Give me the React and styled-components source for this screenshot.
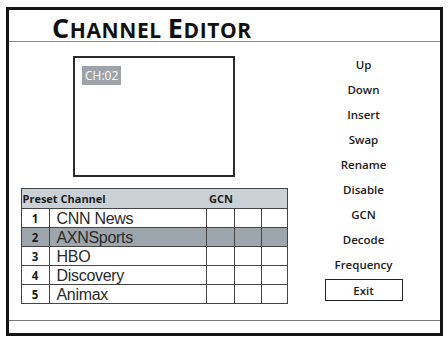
import React from 'react';
import styled, { createGlobalStyle } from 'styled-components';

const GlobalStyle = createGlobalStyle`
  html, body {
    margin: 0;
    padding: 0;
    background: #ffffff;
  }
  body {
    font-family: "Open Sans", "Liberation Sans", sans-serif;
  }
`;

const Frame = styled.div`
  box-sizing: border-box;
  margin: 7px 0 0 6px;
  width: 437px;
  height: 329px;
  border: 3px solid #141414;
  display: flex;
  flex-direction: column;
`;

const TitleBar = styled.div`
  height: 31px;
  border-bottom: 1px solid #8a8a8a;
  display: flex;
  align-items: flex-end;
  padding-left: 43px;
`;

const Title = styled.h1`
  margin: 0 0 -4px 0;
  font-family: "Open Sans", sans-serif;
  font-weight: 700;
  font-size: 21px;
  line-height: 30px;
  letter-spacing: 0.6px;
  color: #111;
`;

const BigLetter = styled.span`
  font-size: 27px;
`;

const Body = styled.div`
  flex: 1;
  display: flex;
  padding: 14px 0 0 12px;
`;

const LeftColumn = styled.div`
  width: 266px;
  display: flex;
  flex-direction: column;
  align-items: center;
  gap: 11px;
`;

const Preview = styled.div`
  box-sizing: border-box;
  width: 162px;
  height: 121px;
  border: 2px solid #2a2a2a;
  padding: 5px 7px;
`;

const ChannelTag = styled.span`
  display: inline-block;
  background: #9ea3aa;
  color: #ffffff;
  font-family: "Open Sans", sans-serif;
  font-size: 12px;
  line-height: 19px;
  padding: 0 3px;
`;

const Table = styled.table`
  width: 266px;
  border-collapse: collapse;
  table-layout: fixed;
  border: 1px solid #444;
`;

const HeadCell = styled.th`
  background: #c9d0d6;
  height: 19px;
  padding: 0 0 0 ${(p) => p.$pad || 1}px;
  text-align: left;
  font-family: "Open Sans", sans-serif;
  font-weight: 700;
  font-size: 11px;
  color: #1c1c1c;
  border-bottom: 1px solid #444;
`;

const Row = styled.tr`
  background: ${(p) => (p.$selected ? '#9ea6ad' : '#ffffff')};
`;

const NumCell = styled.td`
  height: 18px;
  padding: 0;
  text-align: center;
  font-family: "Open Sans", sans-serif;
  font-weight: 700;
  font-size: 11.5px;
  color: #1c1c1c;
  border: 1px solid #444;
`;

const NameCell = styled.td`
  height: 18px;
  padding: 0 0 0 7px;
  font-family: "Liberation Sans", Arial, sans-serif;
  font-size: 16px;
  letter-spacing: -0.3px;
  line-height: 17px;
  color: #2a2a2a;
  border: 1px solid #444;
`;

const GcnCell = styled.td`
  padding: 0;
  border: 1px solid #444;
`;

const Actions = styled.div`
  flex: 1;
  display: flex;
  flex-direction: column;
  align-items: center;
  margin-top: -4px;
`;

const ActionItem = styled.div`
  height: 25px;
  display: flex;
  align-items: center;
  justify-content: center;
  font-family: "Open Sans", sans-serif;
  font-weight: 600;
  font-size: 11.5px;
  color: #1a1a1a;
`;

const ExitButton = styled(ActionItem)`
  box-sizing: border-box;
  margin-top: 2px;
  width: 78px;
  height: 22px;
  border: 1.5px solid #222;
`;

const Footer = styled.div`
  height: 12px;
  border-top: 1px solid #7a7a7a;
`;

const channels = [
  { num: 1, name: 'CNN News' },
  { num: 2, name: 'AXNSports', selected: true },
  { num: 3, name: 'HBO' },
  { num: 4, name: 'Discovery' },
  { num: 5, name: 'Animax' },
];

const actions = ['Up', 'Down', 'Insert', 'Swap', 'Rename', 'Disable', 'GCN', 'Decode', 'Frequency'];

function App() {
  return (
    <>
      <GlobalStyle />
      <Frame>
        <TitleBar>
          <Title>
            <BigLetter>C</BigLetter>HANNEL <BigLetter>E</BigLetter>DITOR
          </Title>
        </TitleBar>
        <Body>
          <LeftColumn>
            <Preview>
              <ChannelTag>CH:02</ChannelTag>
            </Preview>
            <Table>
              <colgroup>
                <col style={{ width: 28 }} />
                <col style={{ width: 157 }} />
                <col style={{ width: 28 }} />
                <col style={{ width: 27 }} />
                <col style={{ width: 26 }} />
              </colgroup>
              <thead>
                <tr>
                  <HeadCell colSpan={2}>Preset Channel</HeadCell>
                  <HeadCell colSpan={3} $pad={3}>GCN</HeadCell>
                </tr>
              </thead>
              <tbody>
                {channels.map((c) => (
                  <Row key={c.num} $selected={c.selected}>
                    <NumCell>{c.num}</NumCell>
                    <NameCell>{c.name}</NameCell>
                    <GcnCell />
                    <GcnCell />
                    <GcnCell />
                  </Row>
                ))}
              </tbody>
            </Table>
          </LeftColumn>
          <Actions>
            {actions.map((a) => (
              <ActionItem key={a}>{a}</ActionItem>
            ))}
            <ExitButton>Exit</ExitButton>
          </Actions>
        </Body>
        <Footer />
      </Frame>
    </>
  );
}

export default App;
